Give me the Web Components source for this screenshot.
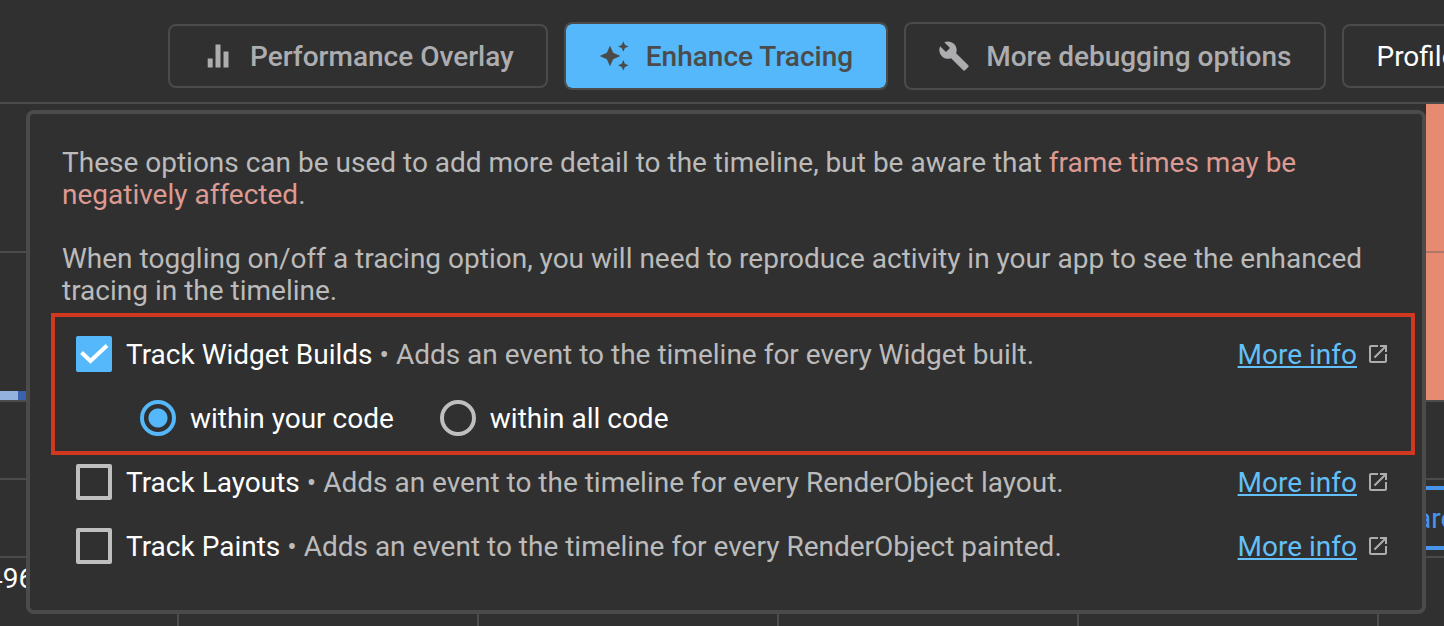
<!DOCTYPE html>
<html lang="en">
<head>
<meta charset="utf-8">
<meta name="viewport" content="width=device-width, initial-scale=1">
<title>Performance – Enhance Tracing</title>
<style>
  html, body { margin: 0; }
  body {
    --bg: #303030; --line: #4b4b4b; --blue: #54b8fa; --muted: #bbbbbb; --icon: #adadb0;
    background: var(--bg); color: #fff;
    font-family: Roboto, "Liberation Sans", sans-serif; font-size: 28px; line-height: 33px;
    overflow: hidden;
  }
</style>
</head>
<body>
<perf-page></perf-page>
<script>
const define = (name, html, setup) => customElements.define(name, class extends HTMLElement {
  connectedCallback() {
    if (this.shadowRoot) return;
    const t = document.createElement('template');
    t.innerHTML = '<style>*{box-sizing:border-box}</style>' + html;
    this.attachShadow({ mode: 'open' }).append(t.content.cloneNode(true));
    if (setup) setup(this, this.shadowRoot);
  }
});

define('tool-button', `
<style>
  :host { display: block; flex: none; }
  button {
    display: flex; align-items: center; gap: 16px; height: 64px; padding: 0 32px;
    border: 2px solid var(--line); border-radius: 8px; background: none;
    color: var(--icon); font: inherit; font-weight: 500; white-space: nowrap;
  }
  :host([tall]) button { height: 68px; padding-right: 33px; }
  :host([selected]) button { background: var(--blue); background-clip: padding-box; color: #4b4b4b; }
  ::slotted(svg) { width: 32px; height: 32px; fill: currentColor; flex: none; }
</style>
<button type="button"><slot name="icon"></slot><span><slot></slot></span></button>`);

define('granularity-select', `
<style>
  :host { display: block; flex: none; }
  select {
    appearance: none; display: block; height: 64px; width: 360px; padding: 0 32px;
    border: 2px solid var(--line); border-radius: 8px; background: none; color: #fff; font: inherit;
  }
</style>
<select aria-label="Profile granularity"><option>Profile</option></select>`);

define('more-info', `
<style>
  :host { display: flex; align-items: center; gap: 9px; flex: none; }
  a { color: #62bff8; text-decoration-thickness: 2px; text-underline-offset: 2px; }
  svg { width: 24px; height: 24px; fill: var(--icon); }
</style>
<a href="#">More info</a>
<svg viewBox="0 0 24 24" aria-hidden="true"><path d="M19 19H5V5h7V3H5a2 2 0 0 0-2 2v14a2 2 0 0 0 2 2h14c1.100 0 2-.9 2-2v-7h-2v7zM14 3v2h3.590l-9.830 9.830 1.410 1.410L19 6.410V10h2V3h-7z"/></svg>`);

define('track-option', `
<style>
  :host { display: flex; align-items: center; justify-content: space-between; height: 64px; padding-left: 14px; }
  .main { display: flex; align-items: center; gap: 14px; }
  .box { display: grid; flex: none; }
  .box > * { grid-area: 1 / 1; width: 36px; height: 36px; margin: 0; }
  input { appearance: none; border: 4px solid #bfbfbf; border-radius: 2px; }
  input:checked { border-color: var(--blue); background: var(--blue); }
  svg { fill: none; stroke: #fff; stroke-width: 4; pointer-events: none; visibility: hidden; }
  input:checked + svg { visibility: visible; }
  .desc { color: var(--muted); }
</style>
<div class="main">
  <span class="box"><input type="checkbox" id="c"><svg viewBox="0 0 36 36" aria-hidden="true"><path d="M5.500 16.500 L14.500 25 L31 9.500"/></svg></span>
  <label for="c"><slot></slot> <span class="desc">• <slot name="desc"></slot></span></label>
</div>
<more-info></more-info>`, (host, root) => {
  root.querySelector('input').checked = host.hasAttribute('checked');
});

define('code-scope', `
<style>
  :host { display: flex; align-items: center; gap: 46px; height: 64px; padding-left: 78px; }
  .choice { display: flex; align-items: center; gap: 14px; }
  input {
    appearance: none; width: 36px; height: 36px; margin: 0; border: 4px solid #bfbfbf; border-radius: 50%;
  }
  input:checked { border-color: var(--blue); background: radial-gradient(circle, var(--blue) 9px, transparent 10px); }
</style>
<div class="choice"><input type="radio" name="scope" id="own" checked><label for="own">within your code</label></div>
<div class="choice"><input type="radio" name="scope" id="all"><label for="all">within all code</label></div>`);

define('highlight-group', `
<style>
  :host { display: block; position: relative; }
  :host::after {
    content: ""; position: absolute; inset: -9px -25px -5px -11px;
    border: 4px solid #d13820; pointer-events: none;
  }
</style>
<slot></slot>`);

define('tracing-dialog', `
<style>
  :host {
    display: block; padding: 33px 32px 32px; background: var(--bg);
    border: 4px solid var(--line); border-radius: 8px;
  }
  p { margin: 0 0 32px; color: var(--muted); line-height: 32px; }
  p + p { margin-bottom: 15px; }
  em { font-style: normal; color: #dd9a92; }
</style>
<p>These options can be used to add more detail to the timeline, but be aware that <em>frame times may be negatively affected</em>.</p>
<p>When toggling on/off a tracing option, you will need to reproduce activity in your app to see the enhanced tracing in the timeline.</p>
<highlight-group>
  <track-option checked>Track Widget Builds<span slot="desc">Adds an event to the timeline for every Widget built.</span></track-option>
  <code-scope></code-scope>
</highlight-group>
<track-option>Track Layouts<span slot="desc">Adds an event to the timeline for every RenderObject layout.</span></track-option>
<track-option>Track Paints<span slot="desc">Adds an event to the timeline for every RenderObject painted.</span></track-option>`);

define('frames-chart', `
<style>
  :host { display: flex; justify-content: space-between; border-bottom: 2px solid var(--line);
    background: linear-gradient(var(--line), var(--line)) 0 147px / 100% 2px no-repeat; height: 298px; }
  .ok { align-self: flex-end; display: flex; height: 9px; }
  .ok i { width: 18px; background: #93b3de; }
  .ok i + i { background: #3b62ad; }
  .jank { width: 18px; background: linear-gradient(#ad776b, #ad776b) 0 147px / 100% 2px no-repeat #e68a72; }
</style>
<div class="ok"><i></i><i></i></div><div class="jank"></div>`);

define('timeline-controls', `
<style>
  :host { display: block; }
  .legend { height: 78px; border-bottom: 2px solid var(--line); }
  .bar { display: flex; justify-content: flex-end; align-items: center; height: 78px; border-bottom: 2px solid var(--line); }
  button { height: 64px; width: 44px; padding: 0 0 0 16px; border: solid #4896ec; border-width: 4px 0; background: none;
    color: #4896ec; font: inherit; text-align: left; overflow: hidden; }
</style>
<div class="legend"></div>
<div class="bar"><button type="button">arc</button></div>`);

define('time-ruler', `
<style>
  :host { display: flex; flex: 1; min-height: 68px; margin-left: -13px; }
  span { flex: none; width: 300px; padding-top: 4px; border-right: 2px solid var(--line); }
  span:first-of-type { width: 192px; }
</style>
<span>496</span><span></span><span></span><span></span><span></span>`);

define('perf-page', `
<style>
  :host { display: flex; flex-direction: column; min-height: 100vh; overflow: hidden; }
  header { display: flex; align-items: center; gap: 16px; padding: 22px 0 12px 168px; border-bottom: 2px solid var(--line); }
  main { position: relative; flex: 1; display: flex; flex-direction: column; }
  tracing-dialog { position: absolute; top: 6px; left: 26px; right: 18px; }
</style>
<header>
  <tool-button>
    <svg slot="icon" viewBox="0 0 32 32" aria-hidden="true"><path d="M5.700 18.500h5v9h-5zM13.500 4.500h5v23h-5zM21.500 11.500h5v16h-5z"/></svg>
    Performance Overlay</tool-button>
  <tool-button tall selected>
    <svg slot="icon" viewBox="0 0 32 32" aria-hidden="true"><path d="M12 5.700l3.200 7.100 7.100 3.200-7.100 3.200-3.200 7.100-3.200-7.100L1.700 16l7.100-3.200zM25.300 1.300l1.600 3.600 3.600 1.600-3.600 1.600-1.600 3.600-1.600-3.600-3.600-1.600 3.600-1.600zM25.300 20.100l1.600 3.600 3.600 1.600-3.600 1.600-1.600 3.600-1.600-3.600-3.600-1.600 3.600-1.600z"/></svg>
    Enhance Tracing</tool-button>
  <tool-button tall>
    <svg slot="icon" viewBox="0 0 24 24" aria-hidden="true"><path d="M22.700 19l-9.100-9.100c.9-2.300.4-5-1.500-6.900-2-2-5-2.400-7.400-1.300L9 6 6 9 1.600 4.700C.4 7.100.9 10.100 2.900 12.100c1.900 1.900 4.600 2.400 6.900 1.500l9.100 9.100c.4.4 1 .4 1.400 0l2.300-2.300c.5-.4.5-1.100.1-1.400z"/></svg>
    More debugging options</tool-button>
  <granularity-select></granularity-select>
</header>
<main>
  <frames-chart></frames-chart>
  <timeline-controls></timeline-controls>
  <time-ruler></time-ruler>
  <tracing-dialog></tracing-dialog>
</main>`);
</script>
</body>
</html>
